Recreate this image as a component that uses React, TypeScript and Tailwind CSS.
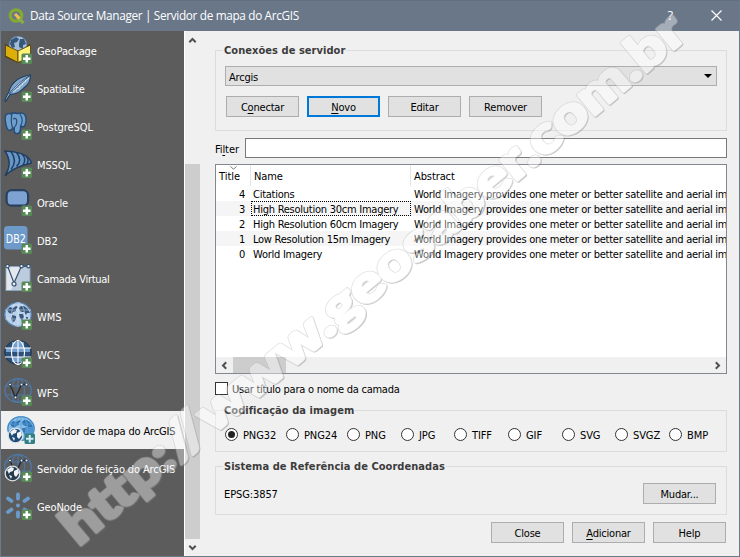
import React from "react";

const Plus = () => (
  <g>
    <rect x="17.5" y="17.5" width="10.5" height="10.5" rx="1.6" fill="#588a58" />
    <path d="M22.75 19v7.5M19 22.75h7.5" stroke="#fff" strokeWidth="2.4" fill="none" />
  </g>
);

const Frame = ({ children }: { children: React.ReactNode }) => (
  <svg width="28" height="28" viewBox="0 0 28 28" className="block shrink-0">
    {children}
    <Plus />
  </svg>
);

const continents =
  "M3 8l3-3 3 1 3-2 2 1-2 2 0 2-3 1-1 2-3-1zM8 13l4 1 0 3-3 4-2-4zM15 6l2-2 3 0 4 3 2 4-3 0-1 2-2-3-2 0-2-1zM15 12l4 0 1 3-2 4-2-3zM22 15l2 0 0 2-2 0z";

const GeoPackage = () => (
  <Frame>
    <path d="M1 8l13 5 12-5v12l-12 7-13-6z" fill="#4b3c0c" />
    <circle cx="14" cy="9" r="9" fill="#a5bcd8" stroke="#52759f" strokeWidth=".8" />
    <path d="M7 4l5-3 3 2-2 3-3 1 1 4-3 1-2-4zM16 3l4 0 2 5-3 1 0 4-4-2 0-3z" fill="#355779" />
    <path d="M1.500 9L14 15v11.500L1.500 20z" fill="#dcae0c" stroke="#5a4508" strokeWidth=".9" />
    <path d="M14 15l12.500-6v11.500L14 26.500z" fill="#fdf178" stroke="#5a4508" strokeWidth=".9" />
  </Frame>
);

const Feather = () => (
  <Frame>
    <path d="M.8 27c1-4 2-6 4-9C7 10 14 3 26.500 .8c.5 6-2 10-7 13.500-4 4-9 6-13 6-2 2-3 4-4.500 7z" fill="#82a8cc" stroke="#1f3f60" strokeWidth="1.100" />
    <path d="M5 20C10 13 18 6 26 1.500c-6 5-14 12-20 18z" fill="#d8e6f4" stroke="#274b70" strokeWidth=".8" />
    <path d="M9 18l3-2M12 15.500l4-2M15 13l4-3M18 10l4-3M21 7l4-3" stroke="#dce9f5" strokeWidth="1" />
  </Frame>
);

const Elephant = () => (
  <Frame>
    <path d="M6 1.500C2 1 .8 4 1.200 8c.5 4 2 10 4 10.500 1 .2 2-1 3-1.500l2-1v3c0 3 5 4 6 0l.5-5 3 1c3-3 3-10 1-12.500-2-2-5-1.500-7-1-3-1-5-1-7 .5z" fill="#6f9fce" stroke="#274d75" strokeWidth="1.500" />
    <path d="M8 2c-1 4-1 9 .5 14M9 7c3-2 5 1 3 6l-2 3M16 2c2 3 3 8 .5 12" fill="none" stroke="#274d75" strokeWidth="1.200" />
  </Frame>
);

const MsSql = () => (
  <Frame>
    <path d="M1 1c10 0 24 3 26.500 12C19 15 7 19 1 26c6-10 5-17 0-25z" fill="#6797c8" stroke="#233f60" strokeWidth="1.500" />
    <path d="M7 1.500c5 7 4 13 0 18M12.500 2.500c5 6 3 11 0 14M18 4c4 4 3 8 1 11M22 6c3 3 2 6 1 8" stroke="#233f60" strokeWidth="1.500" fill="none" />
  </Frame>
);

const Oracle = () => (
  <Frame>
    <rect x="2.600" y="2.200" width="21.500" height="15.500" rx="5" fill="#7ea2d2" stroke="#28415f" strokeWidth="2.200" />
  </Frame>
);

const Db2 = () => (
  <Frame>
    <rect width="23.500" height="23.500" rx="3.500" fill="#6e9aca" />
    <text x="11.800" y="16.500" textAnchor="middle" textLength="20" lengthAdjust="spacingAndGlyphs" fontFamily="DejaVu Sans Condensed" fontSize="13" fill="#fff">DB2</text>
  </Frame>
);

const VirtualLayer = () => (
  <Frame>
    <rect x="2" y="2.500" width="24" height="24" fill="#bccbdd" stroke="#8ca4bd" />
    <path d="M2.500 3h15L7 26H2.500z" fill="#e3e8ef" />
    <path d="M3.500 2L10 19M17.500 2L10 19M18 2.500h7" stroke="#35526f" strokeWidth="1.200" />
    <g fill="#e8eff7" stroke="#35526f" strokeWidth="1.200">
      <circle cx="3.500" cy="2.200" r="1.700" /><circle cx="17.500" cy="2.200" r="1.700" /><circle cx="24.500" cy="2.200" r="1.700" />
      <circle cx="10" cy="20" r="2" />
    </g>
  </Frame>
);

const GlobeLines = ({ color }: { color: string }) => (
  <g fill="none" stroke={color} strokeWidth="1.100">
    <path d="M14 .5v24M1 8h26M1 17h26" />
    <ellipse cx="14" cy="12.500" rx="6.500" ry="12" />
  </g>
);

const Wms = () => (
  <Frame>
    <ellipse cx="14" cy="12.500" rx="13.200" ry="11.800" fill="#b9d0ea" stroke="#5786b8" strokeWidth="1.300" />
    <path d={continents} fill="#38597d" />
    <g opacity=".5"><GlobeLines color="#e4eef9" /></g>
  </Frame>
);

const Wcs = () => (
  <Frame>
    <ellipse cx="14" cy="12.500" rx="13.200" ry="11.800" fill="#2c5079" stroke="#1f3855" strokeWidth="1.200" />
    <path d="M2 8h6v4H2zM20 8h6v4h-6zM8 2h12v6H8zM8 17h12v5H8z" fill="#759fce" />
    <path d="M8 8h12v4H8z" fill="#759fce" />
    <GlobeLines color="#fff" />
  </Frame>
);

const WfsBody = () => (
  <g>
    <ellipse cx="14" cy="12.500" rx="13.200" ry="11.800" fill="none" stroke="#4e78a9" strokeWidth="1.300" />
    <GlobeLines color="#4f78a8" />
    <path d="M6 6.500l5.500 13 6-13h5" fill="none" stroke="#242b33" strokeWidth="1.400" />
    <g fill="#e8edf3" stroke="#242b33" strokeWidth=".8">
      <circle cx="6" cy="6.500" r="1.400" /><circle cx="17.500" cy="6.500" r="1.400" /><circle cx="22.500" cy="6.500" r="1.400" /><circle cx="11.500" cy="19.500" r="1.400" />
    </g>
  </g>
);

const Wfs = () => (
  <Frame><WfsBody /></Frame>
);

const SmallGlobe = ({ land }: { land: string }) => (
  <g>
    <circle cx="8.500" cy="19.500" r="7.300" fill={land} stroke="#dbe3ea" strokeWidth="1.300" />
    <path d="M3 16l4-3 3 1-1 3-3 1-1 2zM10 17l4-2 1 4-3 4-2-2zM5 21l3 1-1 3z" fill="#eef3f7" />
  </g>
);

const ArcMap = () => (
  <svg width="28" height="28" viewBox="0 0 28 28" className="block shrink-0">
    <ellipse cx="14" cy="12.500" rx="13.200" ry="11.800" fill="#8cc0e8" stroke="#3c83c4" strokeWidth="1.300" />
    <path d={continents} fill="#2f76b5" />
    <path d="M18 11h8.500v9H18z" fill="#4d93d0" />
    <g opacity=".8"><GlobeLines color="#5da0d9" /></g>
    <SmallGlobe land="#1e4a75" />
    <rect x="17.500" y="17.500" width="10.500" height="10.500" rx="1.600" fill="#348082" />
    <path d="M22.750 19v7.500M19 22.750h7.500" stroke="#d4ecf5" strokeWidth="2" />
  </svg>
);

const ArcFeature = () => (
  <Frame><WfsBody /><SmallGlobe land="#27394b" /></Frame>
);

const GeoNode = () => (
  <Frame>
    <g stroke="#6b9bcd" strokeWidth="3.800" strokeLinecap="round">
      <path d="M14 2.500v4M14 20.500v4M4 6.500l3.500 2.500M24 6.500l-3.500 2.500M4 20l3.500-2.500M24 20l-3.500-2.500" />
    </g>
    <circle cx="14" cy="13.500" r="2" fill="#6b9bcd" />
  </Frame>
);

const sources = [
  { label: "GeoPackage", Icon: GeoPackage, track: "tracking-[-0.1px]" },
  { label: "SpatiaLite", Icon: Feather, track: "tracking-[-0.2px]" },
  { label: "PostgreSQL", Icon: Elephant, track: "tracking-[-0.05px]" },
  { label: "MSSQL", Icon: MsSql, track: "tracking-[-0.1px]" },
  { label: "Oracle", Icon: Oracle, track: "tracking-[-0.2px]" },
  { label: "DB2", Icon: Db2, track: "" },
  { label: "Camada Virtual", Icon: VirtualLayer, track: "tracking-[-0.28px]" },
  { label: "WMS", Icon: Wms, track: "" },
  { label: "WCS", Icon: Wcs, track: "" },
  { label: "WFS", Icon: Wfs, track: "" },
  { label: "Servidor de mapa do ArcGIS", Icon: ArcMap, track: "tracking-[-0.17px]" },
  { label: "Servidor de feição do ArcGIS", Icon: ArcFeature, track: "tracking-[-0.12px]" },
  { label: "GeoNode", Icon: GeoNode, track: "tracking-[-0.1px]" },
];

const Chevron = ({ turn }: { turn: string }) => (
  <svg width="9" height="9" viewBox="0 0 9 9" className={turn}>
    <path d="M1.300 6.200L4.500 3l3.200 3.200" fill="none" stroke="#505050" strokeWidth="2" />
  </svg>
);

const Button = ({ children, focus }: { children: React.ReactNode; focus?: boolean }) => (
  <button className={`flex h-[21px] w-[73px] shrink-0 items-center justify-center bg-[#e1e1e1] tracking-[-0.2px] ${focus ? "border-2 border-[#0078d7]" : "border border-[#adadad]"}`}>
    <span className="mt-px">{children}</span>
  </button>
);

const U = ({ children }: { children: React.ReactNode }) => (
  <span className="underline underline-offset-2">{children}</span>
);

const Group = ({ title, box, children }: { title: string; box: string; children: React.ReactNode }) => (
  <fieldset className={`w-[512px] min-w-0 border border-[#dcdcdc] ${box}`}>
    <legend className="ml-[7px] h-[14px] px-px text-[11px] leading-[15px] font-bold tracking-[0.05px] text-[#3c3c3c]">{title}</legend>
    {children}
  </fieldset>
);

const layers = [
  [4, "Citations"],
  [3, "High Resolution 30cm Imagery"],
  [2, "High Resolution 60cm Imagery"],
  [1, "Low Resolution 15m Imagery"],
  [0, "World Imagery"],
] as const;

const formats = [
  ["PNG32", "w-[61px]"], ["PNG24", "w-[61px]"], ["PNG", "w-[54px]"], ["JPG", "w-[53px]"], ["TIFF", "w-[54px]"],
  ["GIF", "w-[54px]"], ["SVG", "w-[53px]"], ["SVGZ", "w-[54px]"], ["BMP", "w-[54px]"],
];

const Watermark = () => (
  <svg width="740" height="557" className="pointer-events-none absolute top-0 -left-px">
    <defs>
      <text id="site" textLength="796" lengthAdjust="spacingAndGlyphs">http://www.geosaber.com.br</text>
    </defs>
    <g opacity=".4" transform="translate(78.500 547) rotate(-39.900)" fontFamily="Lato" fontWeight="900" fontSize="51" strokeLinejoin="round">
      <use href="#site" x="0.200" y="1.500" fill="#777" stroke="#777" strokeWidth="3.200" />
      <use href="#site" fill="#b4b4b4" stroke="#b4b4b4" strokeWidth="4" />
      <use href="#site" fill="#fff" stroke="#fff" strokeWidth="2.600" />
    </g>
  </svg>
);

export default function App() {
  return (
    <div className="relative flex h-[557px] w-[740px] flex-col overflow-hidden border border-t-0 border-[#6b7a8d] bg-[#f0f0f0] font-['DejaVu_Sans_Condensed','DejaVu_Sans',sans-serif] text-[11px] leading-[15px] whitespace-nowrap text-black">
      <header className="flex h-[31px] shrink-0 items-center border-t border-[#5f7183] bg-[#697789] font-['Open_Sans','Noto_Sans',sans-serif] text-[12px] text-white">
        <svg width="17" height="17" viewBox="0 0 17 17" className="ml-[7px]">
          <circle cx="8" cy="7.500" r="5.700" fill="none" stroke="#83ab32" strokeWidth="3.200" />
          <path d="M9 9l6.500 6" stroke="#8cab46" strokeWidth="3.200" />
          <path d="M7 6l4.500 4.500" stroke="#f1bd4d" strokeWidth="3" />
        </svg>
        <span className="-mt-px ml-[5px] text-[11.8px] tracking-[-0.34px]">Data Source Manager | Servidor de mapa do ArcGIS</span>
        <span className="-mt-[2px] mr-[38px] ml-auto text-[13px]">?</span>
        <svg width="11" height="11" viewBox="0 0 11 11" className="-mt-[2px] mr-[17px]">
          <path d="M.5.5l10 10M10.500.5l-10 10" stroke="#fff" strokeWidth="1.200" />
        </svg>
      </header>

      <div className="flex min-h-0 flex-1">
        <nav className="w-[183px] shrink-0 bg-[#5c5c5c] text-white">
          {sources.map(({ label, Icon, track }, i) => (
            <div key={label} className={`flex h-[38px] items-center ${i === 10 ? "bg-[#f0f0f0] pl-[6px] text-black" : "pl-[3px]"}`}>
              <Icon />
              <span className={`mt-[2px] ml-[5px] ${track}`}>{label}</span>
            </div>
          ))}
        </nav>
        <div className="flex w-[16px] shrink-0 flex-col items-center border-l border-white bg-[#f0f0f0]">
          <div className="flex h-[133px] pt-[5px]"><Chevron turn="" /></div>
          <div className="h-[375px] w-full bg-[#cdcdcd]" />
          <div className="flex flex-1 items-center"><Chevron turn="rotate-180" /></div>
        </div>

        <main className="flex flex-1 flex-col pl-[15px]">
          <Group title="Conexões de servidor" box="mt-[12px] h-[88px]">
            <div className="mt-[9px] ml-[9px] flex h-[20px] w-[492px] items-center justify-between border border-[#adadad] bg-[#e1e1e1] pr-[4px] pl-[3px]">
              <span className="mt-[2px] tracking-[-0.2px]">Arcgis</span>
              <svg width="8" height="4"><path d="M0 0h8L4 4z" /></svg>
            </div>
            <div className="mt-[10px] ml-[10px] flex gap-2">
              <Button>C<U>o</U>nectar</Button>
              <Button focus><U>N</U>ovo</Button>
              <Button>Editar</Button>
              <Button>Remover</Button>
            </div>
          </Group>

          <label className="mt-[7px] flex h-[20px] w-[512px] items-center justify-between">
            <span className="mt-[2px] tracking-[-0.1px]">Fi<U>l</U>ter</span>
            <input className="h-[20px] w-[482px] border border-[#7a7a7a] bg-white" />
          </label>

          <div className="mt-[6px] flex h-[210px] w-[512px] flex-col overflow-hidden border border-[#828790] bg-white">
            <div className="flex h-[21px] shrink-0 items-center">
              <div className="relative h-full w-[35px] border-r border-[#e5e5e5] pt-[4px] pl-[3px]">
                Title
                <svg width="7" height="4" className="absolute top-[1px] left-[14px]"><path d="M.5.3l3 3 3-3" fill="none" stroke="#777" /></svg>
              </div>
              <div className="h-full w-[160px] border-r border-[#e5e5e5] pt-[4px] pl-[3px] tracking-[-0.1px]">Name</div>
              <div className="h-full pt-[4px] pl-[3px] tracking-[-0.1px]">Abstract</div>
            </div>
            {layers.map(([n, name], i) => (
              <div key={n} className={`flex h-[15px] shrink-0 leading-[17px] tracking-[-0.25px] ${i % 2 ? "bg-[#f5f5f5]" : ""}`}>
                <span className="w-[35px] shrink-0 pr-[6px] text-right">{n}</span>
                <span className={`h-[15px] w-[160px] shrink-0 ${i === 1 ? "border border-dotted border-black pl-px leading-[15px]" : "pl-[2px]"}`}>{name}</span>
                <span className="pl-[3px]">World Imagery provides one meter or better satellite and aerial im</span>
              </div>
            ))}
            <div className="mt-auto flex h-[16px] shrink-0 items-center bg-[#f0f0f0] pl-[4px]">
              <Chevron turn="-rotate-90" />
              <div className="ml-[4px] h-full w-[53px] bg-[#cdcdcd]" />
              <div className="mr-[4px] ml-auto flex"><Chevron turn="rotate-90" /></div>
            </div>
          </div>

          <label className="mt-[8px] flex h-[13px] items-center">
            <span className="h-[13px] w-[13px] border border-[#333] bg-white" />
            <span className="mt-[2px] ml-[4px] tracking-[-0.24px]">Usar título para o nome da camada</span>
          </label>

          <Group title="Codificação da imagem" box="mt-[8px] h-[49px]">
            <div className="mt-[11px] ml-[9px] flex h-[13px] items-center">
              {formats.map(([f, w], i) => (
                <label key={f} className={`flex shrink-0 items-center ${w}`}>
                  <span className="flex h-[13px] w-[13px] items-center justify-center rounded-full border border-[#333] bg-white">
                    {i === 0 && <i className="h-[7px] w-[7px] rounded-full bg-[#222]" />}
                  </span>
                  <span className="mt-px ml-[5px] tracking-[-0.1px]">{f}</span>
                </label>
              ))}
            </div>
          </Group>

          <Group title="Sistema de Referência de Coordenadas" box="mt-[7px] h-[56px]">
            <div className="mt-[10px] mr-[10px] ml-[8px] flex items-center justify-between">
              <span className="mt-[2px] tracking-[-0.1px]">EPSG:3857</span>
              <Button>Mudar...</Button>
            </div>
          </Group>

          <footer className="mt-[7px] flex w-[511px] justify-end gap-2">
            <Button>Close</Button>
            <Button><U>A</U>dicionar</Button>
            <Button>Help</Button>
          </footer>
        </main>
      </div>

      <Watermark />
    </div>
  );
}
